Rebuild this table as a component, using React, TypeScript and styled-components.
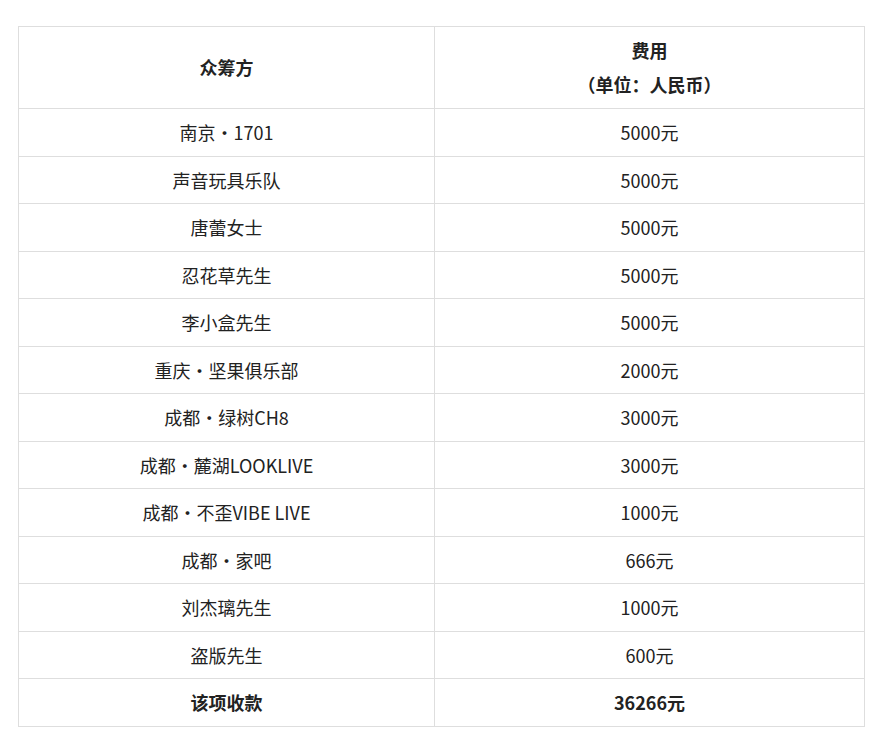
import React from "react";
import styled, { createGlobalStyle } from "styled-components";

const Global = createGlobalStyle`
  html, body { margin: 0; padding: 0; background: #fff; }
  body { font-family: "Noto Sans CJK SC", "Noto Sans", sans-serif; color: #222; }
`;

const Page = styled.div`
  padding: 26px 15px 0 18px;
`;

const Table = styled.table`
  width: 846px;
  border-collapse: collapse;
  table-layout: fixed;
  font-size: 18px;
`;

const HeadCell = styled.th`
  border: 1px solid #dedede;
  font-weight: 700;
  text-align: center;
  line-height: 34px;
  padding: 6px 8px 7px;
  vertical-align: middle;
  color: #222;
`;

const Cell = styled.td<{ $bold?: boolean }>`
  border: 1px solid #dedede;
  text-align: center;
  line-height: 30.5px;
  padding: 8px 8px;
  font-weight: ${(p) => (p.$bold ? 700 : 400)};
  color: #222;
`;

const rows: [string, string][] = [
  ["南京・1701", "5000元"],
  ["声音玩具乐队", "5000元"],
  ["唐蕾女士", "5000元"],
  ["忍花草先生", "5000元"],
  ["李小盒先生", "5000元"],
  ["重庆・坚果俱乐部", "2000元"],
  ["成都・绿树CH8", "3000元"],
  ["成都・麓湖LOOKLIVE", "3000元"],
  ["成都・不歪VIBE LIVE", "1000元"],
  ["成都・家吧", "666元"],
  ["刘杰璃先生", "1000元"],
  ["盗版先生", "600元"],
];

export default function App() {
  return (
    <Page>
      <Global />
      <Table>
        <colgroup>
          <col style={{ width: 416 }} />
          <col style={{ width: 430 }} />
        </colgroup>
        <thead>
          <tr>
            <HeadCell>众筹方</HeadCell>
            <HeadCell>
              费用
              <br />
              （单位：人民币）
            </HeadCell>
          </tr>
        </thead>
        <tbody>
          {rows.map(([a, b]) => (
            <tr key={a}>
              <Cell>{a}</Cell>
              <Cell>{b}</Cell>
            </tr>
          ))}
          <tr>
            <Cell $bold>该项收款</Cell>
            <Cell $bold>36266元</Cell>
          </tr>
        </tbody>
      </Table>
    </Page>
  );
}
